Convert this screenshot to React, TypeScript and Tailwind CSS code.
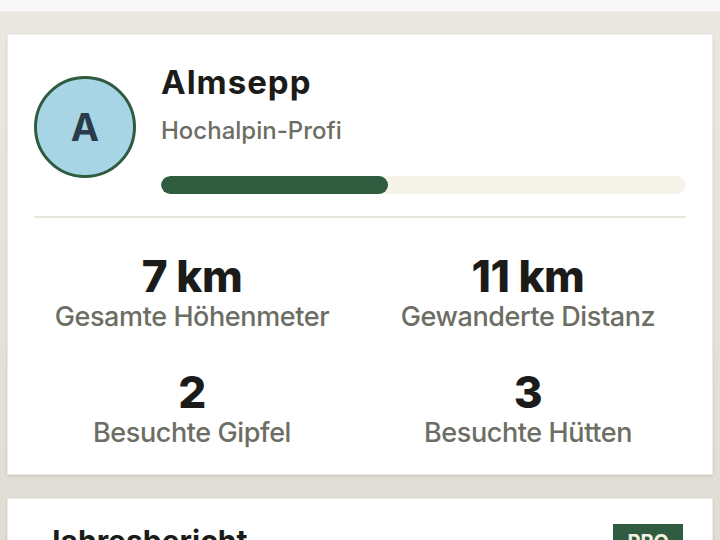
const stats = [
  { value: "7 km", label: "Gesamte Höhenmeter" },
  { value: "11 km", label: "Gewanderte Distanz" },
  { value: "2", label: "Besuchte Gipfel" },
  { value: "3", label: "Besuchte Hütten" },
];

export default function App() {
  return (
    <div
      className="w-[720px] h-[540px] overflow-hidden bg-gradient-to-b from-[#ebe8e1] to-[#e0ddd5]"
      style={{ fontFamily: "Inter, 'Noto Sans', sans-serif" }}
    >
      <div className="h-[12px] bg-[#f7f8f7] border-b border-[#efefeb]" />

      <div className="px-[7px] pt-[22px] flex flex-col gap-[23px]">
        <div className="bg-white border border-[#efece4] shadow-sm px-[26px] pt-[27px] pb-[25px]">
          <div className="flex items-start gap-[25px]">
            <div className="mt-[14px] w-[102px] h-[102px] shrink-0 rounded-full bg-[#a8d5e6] border-[3px] border-[#2f5b3e] flex items-center justify-center text-[38px] font-bold text-[#2b3b4a]">
              A
            </div>
            <div className="flex-1">
              <div className="text-[33px] font-bold text-[#1b1c19] leading-[40px] tracking-[1px]">Almsepp</div>
              <div className="mt-[14px] text-[24px] font-medium text-[#6c6e63] leading-[30px]">Hochalpin-Profi</div>
              <div className="mt-[30px] h-[18px] rounded-full bg-[#f6f3eb] overflow-hidden">
                <div className="h-full rounded-full bg-[#2f5b3e]" style={{ width: "43.2%" }} />
              </div>
            </div>
          </div>

          <div className="mt-[22px] border-t-2 border-[#ebe6db]" />

          <div className="mt-[33px] grid grid-cols-2 gap-x-[20px] gap-y-[34px]">
            {stats.map((s) => (
              <div key={s.label} className="flex flex-col items-center">
                <div className="text-[44px] font-extrabold text-[#1b1c19] leading-[50px] tracking-[-0.5px]">{s.value}</div>
                <div className="text-[27px] font-medium text-[#6c6e63] leading-[32px] tracking-[-0.4px]">{s.label}</div>
              </div>
            ))}
          </div>
        </div>

        <div className="bg-white border border-[#efece4] shadow-sm pl-[35px] pr-[29px] pt-[24px] h-[120px] flex items-start justify-between">
          <div className="text-[30px] font-bold text-[#1b1c19] leading-[36px]">Jahresbericht</div>
          <div className="mt-[1px] bg-[#2f5b3e] text-[#f3efe3] text-[20px] font-bold leading-[28px] px-[14px] py-[4px]">PRO</div>
        </div>
      </div>
    </div>
  );
}
